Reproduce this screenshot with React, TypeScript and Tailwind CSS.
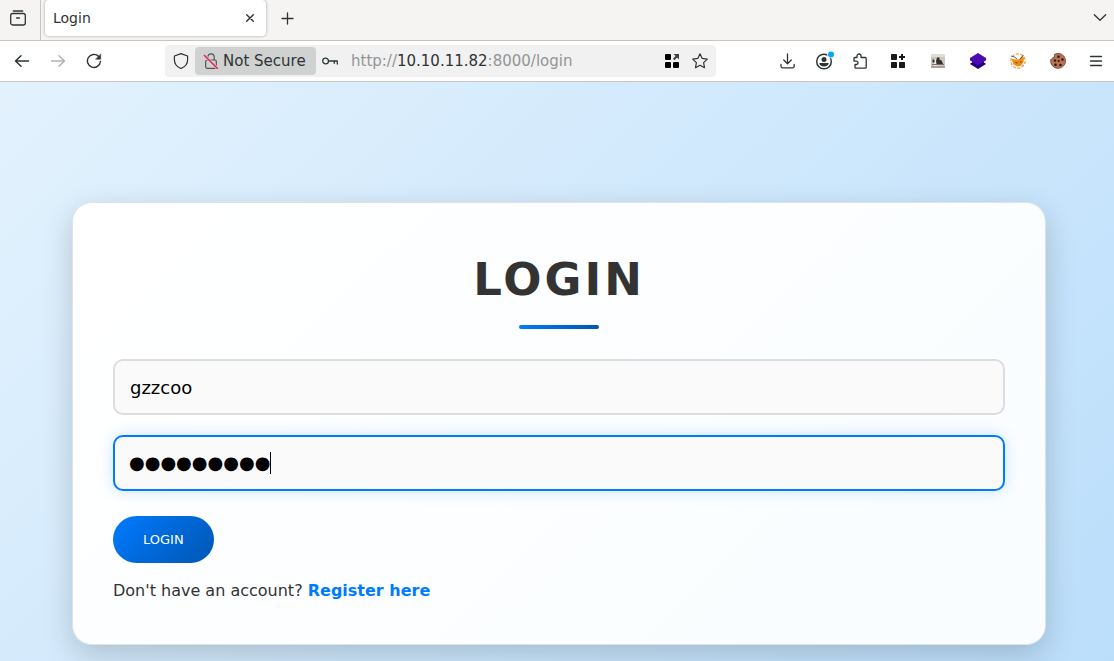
import { useState } from 'react';
import type { ReactNode } from 'react';

interface IconButtonProps {
  label: string;
  children: ReactNode;
  className?: string;
}

function IconButton({ label, children, className = '' }: IconButtonProps) {
  return (
    <button type="button" aria-label={label} className={`flex h-8 shrink-0 items-center justify-center ${className}`}>
      {children}
    </button>
  );
}

interface LineIconProps {
  children: ReactNode;
  className?: string;
}

function LineIcon({ children, className = 'size-4' }: LineIconProps) {
  return (
    <svg
      viewBox="0 0 16 16"
      fill="none"
      stroke="currentColor"
      strokeWidth="1.3"
      strokeLinecap="round"
      strokeLinejoin="round"
      className={className}
    >
      {children}
    </svg>
  );
}

function TabBar() {
  return (
    <div className="flex h-10 items-start bg-[#f5f4f2]">
      <div className="flex h-10 w-[41px] shrink-0 items-center justify-center border-r border-[#c9c5be] pb-1 pr-1">
        <button type="button" aria-label="Recent browsing">
          <LineIcon className="size-4">
            <path d="M3.3 1h9.4" />
            <rect x=".7" y="3.5" width="14.600" height="11.500" rx="2" />
            <path d="M6.600 8h2.800" />
          </LineIcon>
        </button>
      </div>
      <div className="ml-1 flex h-9 w-[221px] shrink-0 items-center justify-between rounded bg-white pl-2 pr-2 shadow-[0_0_3px_rgba(0,0,0,0.35)]">
        <span className="text-sm">Login</span>
        <IconButton label="Close tab" className="w-4">
          <LineIcon>
            <path d="M4.700 4.700l6.600 6.600M11.300 4.700l-6.600 6.600" strokeWidth="1.400" />
          </LineIcon>
        </IconButton>
      </div>
      <IconButton label="New tab" className="ml-3 mt-0.5 w-5">
        <LineIcon>
          <path d="M7.500 3v11M2 8.500h11" strokeWidth="1.300" />
        </LineIcon>
      </IconButton>
      <IconButton label="List all tabs" className="ml-auto mr-1 mt-0.5 w-5">
        <LineIcon>
          <path d="M2.300 4.700L8 10.300l5.700-5.600" />
        </LineIcon>
      </IconButton>
    </div>
  );
}

function AddressBar() {
  return (
    <div className="flex h-8 max-w-[551px] flex-1 items-center rounded bg-[#f1f1f1]">
      <IconButton label="Tracking protection" className="w-[30px] pl-0.5">
        <LineIcon>
          <path d="M8 .6L14.600 3v3.800C14.600 11 12 14 8 15.500 4 14 1.400 11 1.400 6.800V3z" strokeWidth="1.200" />
        </LineIcon>
      </IconButton>
      <button
        type="button"
        className="flex h-7 w-[121px] shrink-0 items-center gap-1 rounded-sm bg-[#d0d2d1] pl-2 text-[15px]"
      >
        <svg viewBox="0 0 16 16" fill="none" className="size-4 shrink-0" strokeWidth="1.2">
          <rect x="2.700" y="7" width="10.600" height="8.300" rx="1.500" stroke="#4d5355" />
          <path d="M4.800 7V4a3.200 3.200 0 0 1 6.400 0v3" stroke="#4d5355" />
          <path d="M1 2l14 14" stroke="#d0d2d1" strokeWidth="2.800" />
          <path d="M1 2l14 14" stroke="#e8204e" strokeWidth="1.500" />
        </svg>
        <span className="whitespace-nowrap">Not Secure</span>
      </button>
      <IconButton label="Saved login" className="w-7">
        <LineIcon>
          <circle cx="3.600" cy="8" r="2.900" />
          <path d="M6.600 8H15.300v3M12.300 8v2.300" />
        </LineIcon>
      </IconButton>
      <div className="relative ml-[7px] h-8 min-w-0 flex-1 text-[15px] leading-8">
        <input
          type="text"
          aria-label="Address"
          defaultValue="http://10.10.11.82:8000/login"
          className="h-8 w-full bg-transparent text-transparent outline-none"
        />
        <div aria-hidden="true" className="pointer-events-none absolute inset-0 truncate text-[#919595]">
          http://<span className="text-[#2e3436]">10.10.11.82</span>:8000/login
        </div>
      </div>
      <IconButton label="Open app view" className="w-7">
        <svg viewBox="0 0 16 16" className="size-4">
          <rect x="1" y="1" width="6" height="6" rx="1" />
          <rect x="1" y="9" width="6" height="6" rx="1" />
          <rect x="9" y="9" width="6" height="6" rx="1" />
          <path d="M9.500 1H15v5.500l-1.900-1.900L10.500 7.200 9 5.700l2.600-2.600z" fill="#3c4143" />
        </svg>
      </IconButton>
      <IconButton label="Bookmark this page" className="mr-0.5 w-7">
        <LineIcon>
          <path
            d="M8 .8l2.200 4.600 5.100.7-3.700 3.500.9 5.100L8 12.300l-4.500 2.400.9-5.100L.7 6.100l5.100-.7z"
            strokeWidth="1.200"
          />
        </LineIcon>
      </IconButton>
    </div>
  );
}

function Extensions() {
  return (
    <div className="ml-auto flex shrink-0 items-center">
      <IconButton label="Downloads" className="w-9">
        <LineIcon>
          <path d="M7.500 1v9.600M3.700 7l3.800 3.800L11.300 7M1 11.500v1.800a1.500 1.500 0 0 0 1.500 1.500h10.200a1.500 1.500 0 0 0 1.500-1.500v-1.800" />
        </LineIcon>
      </IconButton>
      <IconButton label="Account" className="w-9">
        <svg viewBox="0 0 20 20" className="size-5">
          <circle cx="10" cy="10.500" r="7.300" fill="none" stroke="#2e3436" strokeWidth="1.500" />
          <circle cx="10" cy="8.500" r="2.500" fill="#2e3436" />
          <path d="M5.300 12h9.400c0 2-2.200 3.500-4.700 3.500S5.300 14 5.300 12z" fill="#2e3436" />
          <circle cx="17" cy="3.500" r="3.800" fill="#fff" />
          <circle cx="17" cy="3.500" r="3" fill="#00a8f8" />
        </svg>
      </IconButton>
      <IconButton label="Extensions" className="w-9">
        <LineIcon>
          <path d="M5 4.500V3a2 2 0 0 1 4 0v1.500h4.200a1 1 0 0 1 1 1v8.700a1 1 0 0 1-1 1H4a1 1 0 0 1-1-1v-2.700h1.300a1.700 1.700 0 0 0 0-3.400H2V5.500a1 1 0 0 1 1-1z" />
        </LineIcon>
      </IconButton>
      <IconButton label="App grid" className="w-10">
        <svg viewBox="0 0 16 16" className="size-4" fill="#18191b">
          <rect x="1" y="1" width="6" height="6" rx=".7" />
          <rect x="1" y="9" width="6" height="6" rx=".7" />
          <rect x="9" y="9" width="6" height="6" rx=".7" />
          <path d="M11 1h2v2h2v2h-2v2h-2V5H9V3h2z" />
        </svg>
      </IconButton>
      <IconButton label="Header editor" className="w-10">
        <svg viewBox="0 0 16 16" className="size-4">
          <rect x="1" y="1" width="14" height="14" fill="#cfc6bf" />
          <path d="M1 1h14v3H1z" fill="#e2dcd7" />
          <path d="M4 6h3v7H4z" fill="#ece8e5" />
          <path d="M2.500 6.500h2v3h-2zM7 4.500h2.500v2.300l2 .7 1.700 3.500H6.500L6 8z" fill="#33302f" />
          <path d="M2 11h12v1H2z" fill="#77706a" />
          <path d="M1 13h14v2H1z" fill="#aaa098" />
        </svg>
      </IconButton>
      <IconButton label="Layers" className="w-10">
        <svg viewBox="0 0 16 16" className="size-4">
          <path d="M1.500 8.500h13v1L16 11l-8 5-8-5 1.500-1.500z" fill="#240080" />
          <path d="M8 0l8 5v3l-8 5-8-5V5z" fill="#fff" opacity="0" />
          <path d="M8 0l8 5v2.500l-8 5-8-5V5z" fill="#4b0bb0" />
          <path d="M0 7.500v1.800l1.300.7 1-1zM16 7.500v1.800l-1.300.7-1-1z" fill="#fff" />
        </svg>
      </IconButton>
      <IconButton label="Proxy" className="w-10">
        <svg viewBox="0 0 16 16" className="size-4">
          <circle cx="8" cy="8" r="7.200" fill="none" stroke="#e5a044" strokeWidth="1.200" strokeDasharray="3 1.500" />
          <path d="M1.500 6l5 .5 3-.5L13 2.500 14 6l-.5 3-3 4-3 .5-4-2z" fill="#f28c0f" />
          <path d="M1 3l3.500 1L7 6M10 6l3.500-4" stroke="#4b4742" fill="none" strokeWidth=".9" />
          <path d="M5.500 9.500l2 .5M10 9h1.500" stroke="#5b3511" />
          <path d="M10.500 12.500l3-3v2l-2.500 2z" fill="#c7c4bf" />
        </svg>
      </IconButton>
      <IconButton label="Cookie editor" className="w-10">
        <svg viewBox="0 0 16 16" className="size-4">
          <path
            d="M4.500 1.300A7.500 7.500 0 1 1 .7 6.500L2.500 6l.3-1.500L4.500 4z"
            fill="#ba7350"
            stroke="#704031"
            strokeWidth=".8"
          />
          <g fill="#281a18">
            <circle cx="8.500" cy="3.700" r="1.300" />
            <circle cx="5" cy="7.500" r="1.200" />
            <circle cx="8.700" cy="8" r="1.100" />
            <circle cx="12.500" cy="6.500" r="1.300" />
            <circle cx="5.500" cy="11.700" r="1.300" />
            <circle cx="10.500" cy="12" r="1.300" />
          </g>
        </svg>
      </IconButton>
      <IconButton label="Menu" className="w-9">
        <LineIcon>
          <path d="M2.500 3.500h11M2.500 8h11M2.500 12.500h11" />
        </LineIcon>
      </IconButton>
    </div>
  );
}

function Toolbar() {
  return (
    <div className="flex h-[42px] items-center border-y border-[#c9c5be] bg-white">
      <div className="flex shrink-0 pl-1">
        <IconButton label="Back" className="w-9">
          <LineIcon>
            <path d="M14.500 8H1.500M7 2.800L1.500 8 7 13.200" strokeWidth="1.500" />
          </LineIcon>
        </IconButton>
        <IconButton label="Forward" className="w-9 text-[#b2b3b4]">
          <LineIcon>
            <path d="M1.500 8h13M9 2.800L14.500 8 9 13.200" strokeWidth="1.500" />
          </LineIcon>
        </IconButton>
        <IconButton label="Reload" className="w-9">
          <LineIcon>
            <path d="M14.400 8.500A6.500 6.500 0 1 1 12.700 3.500" strokeWidth="1.400" />
            <path d="M14.700 1.200v5H9.800z" fill="currentColor" strokeWidth=".5" />
          </LineIcon>
        </IconButton>
      </div>
      <div className="ml-[53px] flex min-w-0 flex-1">
        <AddressBar />
      </div>
      <Extensions />
    </div>
  );
}

function LoginCard() {
  const [username, setUsername] = useState('gzzcoo');
  const [password, setPassword] = useState('password1');

  return (
    <div className="rounded-[20px] border border-[#dfe3e6] bg-linear-135 from-white to-[#f9fdff] px-10 pb-[41px] pt-[50px] shadow-[0_10px_30px_rgba(0,0,0,0.18)]">
      <h1 className="text-center text-[45px] font-bold leading-[54px] tracking-[3px]">LOGIN</h1>
      <div className="mx-auto mt-[18px] h-1 w-20 rounded-sm bg-linear-to-r from-[#007bff] to-[#0056b3]" />
      <form className="mt-[30px]" onSubmit={(e) => e.preventDefault()}>
        <input
          type="text"
          aria-label="Username"
          value={username}
          onChange={(e) => setUsername(e.target.value)}
          className="block h-14 w-full rounded-[10px] border-2 border-[#dddddd] bg-[#fafafa] px-[15px] text-lg text-black outline-none"
        />
        <div className="relative mt-5">
          <input
            type="password"
            aria-label="Password"
            value={password}
            onChange={(e) => setPassword(e.target.value)}
            className="block h-14 w-full rounded-[10px] border-2 border-[#007bff] bg-[#fafafa] px-[15px] text-lg text-transparent shadow-[0_0_15px_rgba(0,123,255,0.2)] outline-none"
          />
          {/* mask characters and caret */}
          <div
            aria-hidden="true"
            className="pointer-events-none absolute inset-y-0 left-4 flex items-center text-lg text-black"
          >
            <span>{'●'.repeat(password.length)}</span>
            <span className="h-[22px] w-px bg-black" />
          </div>
        </div>
        <button
          type="submit"
          className="mt-[25px] block h-[47px] rounded-full bg-linear-135 from-[#007bff] to-[#0056b3] px-[30px] text-[13px] text-white"
        >
          LOGIN
        </button>
      </form>
      <p className="mt-4 text-base">
        Don't have an account?{' '}
        <a href="#register" className="font-bold text-[#007bff]">
          Register here
        </a>
      </p>
    </div>
  );
}

export default function App() {
  return (
    <div className="flex min-h-screen flex-col font-['DejaVu_Sans',sans-serif] text-[#2e3436]">
      <header>
        <TabBar />
        <Toolbar />
      </header>
      <main className="flex-1 bg-linear-135 from-[#e3f2fd] to-[#bbdefb] pb-4 pl-[72px] pr-[68px] pt-[120px] text-[#333333]">
        <LoginCard />
      </main>
    </div>
  );
}
